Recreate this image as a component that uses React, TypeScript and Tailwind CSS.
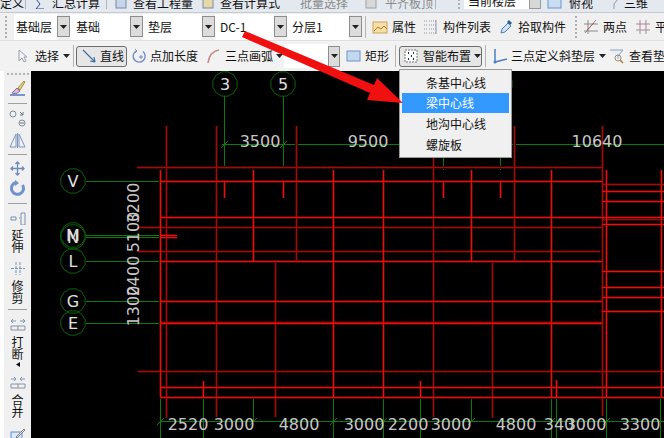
const CJK = "font-['Noto_Sans_CJK_SC','Noto_Sans',sans-serif]";

const brightV = [
  [160, 170, 397],
  [253, 170, 262],
  [333, 170, 397],
  [383, 170, 397],
  [471, 170, 262],
  [551, 170, 397],
  [606, 170, 397],
  [661, 170, 397],
  [224, 181, 198],
  [283, 181, 198],
  [443, 181, 198],
  [500, 181, 198],
  [203, 381, 397],
  [420, 381, 397],
  [556, 380, 397],
];
const darkV = [
  [166, 126, 418],
  [216, 126, 417],
  [296, 126, 260],
  [433, 126, 417],
  [514, 126, 260],
  [602, 126, 416],
  [275, 263, 417],
  [492, 263, 418],
];
const brightH = [
  [160, 602, 181],
  [160, 602, 217],
  [160, 177, 235],
  [160, 177, 237],
  [160, 602, 261],
  [160, 602, 301],
  [160, 602, 323],
  [160, 664, 387],
  [160, 664, 397],
  [602, 664, 191],
  [602, 664, 201],
  [602, 664, 217],
  [602, 664, 224],
  [602, 664, 271],
  [602, 664, 287],
  [602, 664, 297],
  [602, 664, 311],
];
const darkH = [
  [137, 602, 167],
  [137, 602, 227],
  [137, 600, 251],
  [160, 602, 322],
  [138, 664, 371],
  [602, 664, 184],
  [602, 664, 219],
];
const greenH = [
  [86, 160, 181],
  [86, 160, 235],
  [86, 160, 237],
  [86, 160, 261],
  [86, 160, 301],
  [86, 160, 323],
  [222, 664, 144],
  [160, 664, 421],
];
const greenV = [
  [224, 96, 169],
  [283, 96, 169],
  [443, 157, 170],
  [500, 157, 170],
  [160, 397, 438],
  [203, 397, 438],
  [253, 397, 421],
  [333, 397, 438],
  [383, 397, 438],
  [420, 397, 438],
  [471, 397, 421],
  [551, 397, 438],
  [556, 397, 438],
  [606, 397, 438],
  [660, 397, 438],
];
const ticks = [
  [224, 144],
  [283, 144],
  [160, 421],
  [253, 421],
  [333, 421],
  [383, 421],
  [471, 421],
  [551, 421],
  [606, 421],
];
const axisCircles = [
  { t: "3", x: 225, y: 84 },
  { t: "5", x: 283, y: 84 },
  { t: "", x: 500, y: 84 },
  { t: "V", x: 73, y: 181 },
  { t: "M", x: 73, y: 235 },
  { t: "N", x: 73, y: 237 },
  { t: "L", x: 73, y: 261 },
  { t: "G", x: 73, y: 301 },
  { t: "E", x: 73, y: 323 },
];
const dims = [
  { t: "3500", x: 260, y: 147 },
  { t: "9500", x: 368, y: 147 },
  { t: "10640", x: 597, y: 147 },
  { t: "2520", x: 188, y: 430 },
  { t: "3000", x: 234, y: 430 },
  { t: "4800", x: 299, y: 430 },
  { t: "3000", x: 364, y: 430 },
  { t: "2200", x: 408, y: 430 },
  { t: "3000", x: 451, y: 430 },
  { t: "4800", x: 516, y: 430 },
  { t: "340", x: 559, y: 430 },
  { t: "3000", x: 586, y: 430 },
  { t: "3300", x: 640, y: 430 },
];
const sideDims = [
  { t: "1300", y: 306 },
  { t: "2400", y: 276 },
  { t: "5100", y: 232 },
  { t: "3200", y: 203 },
];

function octagon(cx: number, cy: number, r: number) {
  const pts = [];
  for (let i = 0; i < 12; i++) {
    const a = (Math.PI / 6) * i + Math.PI / 12;
    pts.push(`${(cx + r * Math.cos(a)).toFixed(1)},${(cy + r * Math.sin(a)).toFixed(1)}`);
  }
  return pts.join(" ");
}

function CadCanvas() {
  return (
    <svg width="633" height="367" viewBox="31 71 633 367" className="block bg-black">
      <g shapeRendering="crispEdges">
        {greenH.map(([a, b, y], i) => (
          <rect key={i} x={a} y={y} width={b - a} height={1} fill="#0b7a0b" />
        ))}
        {greenV.map(([x, a, b], i) => (
          <rect key={i} x={x} y={a} width={1} height={b - a} fill="#0b7a0b" />
        ))}
        {/* soft edge, the reference lines bleed a little */}
        {darkH.map(([a, b, y], i) => (
          <rect key={i} x={a} y={y - 1} width={b - a} height={3} fill="#3a0303" />
        ))}
        {darkV.map(([x, a, b], i) => (
          <rect key={i} x={x - 1} y={a} width={3} height={b - a} fill="#3a0303" />
        ))}
        {brightH.map(([a, b, y], i) => (
          <rect key={i} x={a} y={y - 1} width={b - a} height={3} fill="#4a0404" />
        ))}
        {brightV.map(([x, a, b], i) => (
          <rect key={i} x={x - 1} y={a} width={3} height={b - a} fill="#4a0404" />
        ))}
        {darkH.map(([a, b, y], i) => (
          <rect key={i} x={a} y={y} width={b - a} height={1} fill="#a00c0c" />
        ))}
        {darkV.map(([x, a, b], i) => (
          <rect key={i} x={x} y={a} width={1} height={b - a} fill="#a00c0c" />
        ))}
        {brightH.map(([a, b, y], i) => (
          <rect key={i} x={a} y={y} width={b - a} height={1} fill="#f00a0a" />
        ))}
        {brightV.map(([x, a, b], i) => (
          <rect key={i} x={x} y={a} width={1} height={b - a} fill="#f00a0a" />
        ))}
      </g>
      {ticks.map(([x, y], i) => (
        <line key={i} x1={x - 3} x2={x + 4} y1={y + 4} y2={y - 3} stroke="#0b7a0b" />
      ))}
      {axisCircles.map((c) => (
        <g key={c.x + "-" + c.y}>
          <polygon points={octagon(c.x, c.y, 12.5)} fill="none" stroke="#0a640a" />
          <text x={c.x} y={c.y + 6} textAnchor="middle" fontSize="16" fill="#e0e0e0" fontFamily="'DejaVu Sans', sans-serif">
            {c.t}
          </text>
        </g>
      ))}
      {dims.map((d) => (
        <text key={d.t + d.x} x={d.x} y={d.y} textAnchor="middle" fontSize="16" fill="#c8c8c8" fontFamily="'DejaVu Sans', sans-serif">
          {d.t}
        </text>
      ))}
      {sideDims.map((d) => (
        <text
          key={d.t + d.y}
          textAnchor="middle"
          fontSize="16"
          fill="#c8c8c8"
          fontFamily="'DejaVu Sans', sans-serif"
          transform={`translate(139 ${d.y}) rotate(-90)`}
        >
          {d.t}
        </text>
      ))}
    </svg>
  );
}

function Sep({ className = "" }: { className?: string }) {
  return <div className={`w-px h-[22px] bg-[#b4b4b4] shrink-0 ${className}`} />;
}

function Caret({ className = "" }: { className?: string }) {
  return (
    <svg width="7" height="4" viewBox="0 0 7 4" className={`shrink-0 ${className}`}>
      <path d="M0 0h7L3.5 4z" fill="#222" />
    </svg>
  );
}

function Grip({ className = "" }: { className?: string }) {
  return <div className={`shrink-0 border-l-2 border-dotted border-[#b0b0b0] ${className}`} />;
}

function Combo({ label, w, pl }: { label: string; w: string; pl: string }) {
  return (
    <>
      <div className={`h-[26px] bg-white flex items-center shrink-0 ${w} ${pl}`}>{label}</div>
      <div className="w-[13px] h-[21px] bg-[#dcdcdc] border border-[#8d8d8d] flex items-center justify-center shrink-0">
        <Caret />
      </div>
    </>
  );
}

function Icon({ children, w = 16, h = 16, className = "" }: { children: React.ReactNode; w?: number; h?: number; className?: string }) {
  return (
    <svg width={w} height={h} viewBox={`0 0 ${w} ${h}`} fill="none" className={`shrink-0 ${className}`}>
      {children}
    </svg>
  );
}

function VText({ chars, className = "" }: { chars: string[]; className?: string }) {
  return (
    <div className={`flex flex-col items-center text-[12px] leading-[12px] text-[#111] shrink-0 ${className}`}>
      {chars.map((c) => (
        <span key={c} className="h-[12px]">{c}</span>
      ))}
    </div>
  );
}

function SideSep({ className = "" }: { className?: string }) {
  return <div className={`w-[19px] h-px bg-[#a0a0a0] shrink-0 ${className}`} />;
}

export default function App() {
  return (
    <div className={`relative w-[664px] h-[438px] overflow-hidden bg-[#f0f0f0] text-[12px] text-[#111] ${CJK}`}>
      {/* clipped top bar */}
      <div className="h-[13px] bg-[#e4e8ef] border-b border-[#c4c9d2] overflow-hidden flex items-end pb-[3px] leading-[12px] whitespace-nowrap">
        <span className="w-[25px] text-right pr-[5px] shrink-0">定义</span>
        <Sep />
        <Icon w={10} h={12} className="ml-[9px]">
          <path d="M9 2H1l4 5-4 5h8" stroke="#2c4a8a" />
        </Icon>
        <span className="ml-[7px] shrink-0">汇总计算</span>
        <Sep className="ml-[6px]" />
        <Icon w={12} h={12} className="ml-[8px]">
          <rect x="1" y="1" width="10" height="10" fill="#c8d4e8" stroke="#7a8aa8" />
        </Icon>
        <span className="ml-[6px] shrink-0">查看工程量</span>
        <Icon w={12} h={12} className="ml-[9px]">
          <rect x="1" y="1" width="10" height="10" fill="#e8d8a8" stroke="#7a8aa8" />
        </Icon>
        <span className="ml-[6px] shrink-0">查看计算式</span>
        <span className="ml-[20px] shrink-0 text-[#8a8a8a]">批量选择</span>
        <Icon w={12} h={12} className="ml-[17px]">
          <rect x="1" y="1" width="10" height="10" fill="#d8d8d8" stroke="#a0a0a0" />
        </Icon>
        <span className="ml-[8px] shrink-0 text-[#8a8a8a]">平齐板顶</span>
        <Sep className="ml-[2px]" />
        <Grip className="ml-[22px] h-[14px]" />
        <div className="ml-[4px] w-[65px] bg-white h-[14px] px-[4px] shrink-0">当前楼层</div>
        <div className="w-[12px] h-[14px] bg-[#d8d8d8] border border-[#999] shrink-0" />
        <Icon w={15} h={12} className="ml-[6px]">
          <rect x="1" y="1" width="13" height="10" fill="#c8dcf2" stroke="#6f94c8" />
        </Icon>
        <span className="ml-[7px] shrink-0">俯视</span>
        <Icon w={12} h={12} className="ml-[14px]">
          <path d="M1 2h10L7 7v5" stroke="#8a97ab" />
        </Icon>
        <span className="ml-[5px] shrink-0">三维</span>
      </div>

      {/* combo row */}
      <div className="h-[28px] flex items-center border-b border-[#e0e0e0] bg-[#f0f0f0] whitespace-nowrap">
        <Grip className="ml-[5px] h-[22px] mr-[7px]" />
        <Combo label="基础层" w="w-[43px]" pl="pl-[2px]" />
        <Combo label="基础" w="w-[60px]" pl="pl-[6px]" />
        <Combo label="垫层" w="w-[59px]" pl="pl-[5px]" />
        <Combo label="DC-1" w="w-[59px]" pl="pl-[5px]" />
        <Combo label="分层1" w="w-[62px]" pl="pl-[5px]" />
        <Sep className="ml-[3px]" />
        <Icon className="ml-[6px]">
          <rect x="1" y="3" width="14" height="11" fill="#f6dfa4" stroke="#c9a35a" />
          <path d="M2 12l4-4 3 2 3-3 3 3" stroke="#b0762a" />
        </Icon>
        <span className="ml-[4px] shrink-0">属性</span>
        <Icon w={14} className="ml-[7px]">
          <path d="M1 2h3M1 6h3M1 10h3M1 14h3M6 2h7M6 6h7M6 10h7M6 14h7" stroke="#8a97ab" strokeDasharray="1 1" />
          <path d="M13 1v14" stroke="#8a97ab" />
        </Icon>
        <span className="ml-[6px] shrink-0">构件列表</span>
        <Icon w={14} className="ml-[8px]">
          <path d="M2 14l1-4 6-6 3 3-6 6z" fill="#cfe2f6" stroke="#4c7fb8" />
          <path d="M8 3l2-2 3 3-2 2z" fill="#2f5f96" />
        </Icon>
        <span className="ml-[5px] shrink-0">拾取构件</span>
        <Grip className="ml-[9px] h-[22px]" />
        <Icon className="ml-[6px]">
          <path d="M5 1v14M13 1L2 14M1 5h14M1 12h14" stroke="#8a8a8a" />
          <path d="M4 11l7-7" stroke="#c0504d" />
        </Icon>
        <span className="ml-[4px] shrink-0">两点</span>
        <Icon className="ml-[8px]">
          <path d="M5 1v14M11 1v14M1 5h14M1 11h14" stroke="#a58a95" />
        </Icon>
        <span className="ml-[4px] shrink-0">平行</span>
      </div>

      {/* drawing tools row */}
      <div className="h-[30px] flex items-center bg-[#f2f2f2] whitespace-nowrap">
        <Icon w={11} className="ml-[17px]">
          <path d="M2 2v11l3-3 2 4 2-1-2-4h3z" fill="#f4f4f8" stroke="#9aa0aa" />
        </Icon>
        <span className="ml-[7px] shrink-0">选择</span>
        <Caret className="ml-[4px]" />
        <Sep className="ml-[3px]" />
        <div className="ml-[2px] w-[51px] h-[21px] flex items-center rounded-[3px] border border-[#6e6e6e] bg-[#e6e6e6] shrink-0">
          <Icon w={15} className="ml-[5px]">
            <path d="M1 2l12 12M13 14l-5-1M13 14l-1-5" stroke="#3a6ea8" strokeWidth="1.2" />
          </Icon>
          <span className="ml-[3px]">直线</span>
        </div>
        <Icon className="ml-[4px]">
          <path d="M12 3.5A6 6 0 1 1 5 3" stroke="#6f8fc0" strokeWidth="1.4" />
          <path d="M4 1l2 2-2 2M8 9h4M10 7v4" stroke="#6f8fc0" />
        </Icon>
        <span className="ml-[3px] shrink-0">点加长度</span>
        <Icon w={14} className="ml-[8px]">
          <path d="M2 15C3 8 7 3 13 2" stroke="#c98a80" strokeWidth="1.6" />
        </Icon>
        <span className="ml-[5px] shrink-0">三点画弧</span>
        <Caret className="ml-[3px]" />
        <div className="ml-[1px] w-[44px] h-[24px] bg-white shrink-0" />
        <div className="w-[12px] h-[21px] bg-[#dcdcdc] border border-[#8d8d8d] flex items-center justify-center shrink-0">
          <Caret />
        </div>
        <Icon w={15} className="ml-[6px]">
          <rect x="1" y="3" width="13" height="10" fill="#c4d8f2" stroke="#6f94c8" />
        </Icon>
        <span className="ml-[4px] shrink-0">矩形</span>
        <Sep className="ml-[6px]" />
        <div className="ml-[3px] w-[83px] h-[21px] flex items-center rounded-[3px] border border-[#6e6e6e] bg-[#e6e6e6] shrink-0">
          <Icon w={14} className="ml-[4px]">
            <rect x="1" y="2" width="12" height="12" fill="#fff" stroke="#777" strokeDasharray="2 1" />
            <path d="M4 5h1M9 5h1M7 8h1M4 11h1M9 11h1" stroke="#16356e" strokeWidth="2" />
          </Icon>
          <span className="ml-[5px]">智能布置</span>
          <Caret className="ml-[3px]" />
        </div>
        <Sep className="ml-[3px]" />
        <Icon className="ml-[6px]">
          <path d="M3 1v13l12-3" stroke="#4d7fc4" strokeWidth="1.5" />
          <circle cx="3" cy="14" r="1.5" fill="#4d7fc4" />
        </Icon>
        <span className="ml-[3px] shrink-0">三点定义斜垫层</span>
        <Caret className="ml-[4px]" />
        <Icon w={15} className="ml-[3px]">
          <path d="M1 2h13L9 8v3" stroke="#8ca0bc" fill="#e8eef6" />
          <circle cx="9" cy="10" r="3" stroke="#a08a70" />
          <path d="M11 12l3 3" stroke="#b07a40" strokeWidth="1.5" />
        </Icon>
        <span className="ml-[5px] shrink-0">查看垫层</span>
      </div>

      <div className="flex">
        {/* left tool strip */}
        <div className="w-[31px] h-[367px] bg-white shrink-0 flex justify-end">
          <div className="w-[27px] h-full bg-[#f0f0f0] flex flex-col items-center overflow-hidden">
            <div className="mt-[2px] w-[22px] border-t-2 border-dotted border-[#b4b4b4] shrink-0" />
            <Icon w={17} h={17} className="mt-[5px]">
              <path d="M1 15h15" stroke="#4f7ac0" strokeWidth="1.5" />
              <path d="M3 13l5-5 3 3-4 3z" fill="#d8b8d8" stroke="#8a6a9a" />
              <path d="M9 8l6-7 1 1-5 8z" fill="#e8d070" stroke="#a89040" />
            </Icon>
            <SideSep className="mt-[6px]" />
            <Icon w={17} h={18} className="mt-[5px]">
              <circle cx="4" cy="5" r="3" stroke="#808c9c" />
              <circle cx="13" cy="14" r="3" stroke="#808c9c" />
              <path d="M11 3l3 3M14 3v3h-3M11 14h4" stroke="#6a7686" />
            </Icon>
            <Icon w={17} h={17} className="mt-[5px]">
              <path d="M7 2L1 15h6zM10 2l6 13h-6z" stroke="#7d95bd" fill="#eef2f8" />
              <path d="M8.5 1v15" stroke="#7d95bd" />
            </Icon>
            <SideSep className="mt-[5px]" />
            <Icon w={15} h={15} className="mt-[6px]">
              <path d="M7.5 1v13M1 7.5h13M5.5 3l2-2 2 2M5.5 12l2 2 2-2M3 5.5l-2 2 2 2M12 5.5l2 2-2 2" stroke="#6d8cbc" strokeWidth="1.3" />
            </Icon>
            <Icon w={16} h={16} className="mt-[4px]">
              <path d="M12.5 5A6 6 0 1 1 6 2.5" stroke="#6f93d0" strokeWidth="3" />
              <path d="M5 0v6l4-3z" fill="#6f93d0" />
            </Icon>
            <SideSep className="mt-[7px]" />
            <Icon w={16} h={13} className="mt-[8px]">
              <path d="M1 5h5v3H1zM9 6h1M11 1v12M15 1v12M11 1h4M11 13h4" stroke="#7d90ac" />
            </Icon>
            <VText chars={["延", "伸"]} className="mt-[4px]" />
            <Icon w={16} h={13} className="mt-[9px]">
              <path d="M1 6.5h14M6 0v13M10 0v13" stroke="#7d90ac" strokeDasharray="3 1" />
            </Icon>
            <VText chars={["修", "剪"]} className="mt-[5px]" />
            <SideSep className="mt-[5px]" />
            <Icon w={16} h={13} className="mt-[8px]">
              <path d="M1 3h5M10 3h5M1 3l2-2M1 3l2 2M15 3l-2-2M15 3l-2 2" stroke="#7d95bd" />
              <path d="M1 8h14v4H1zM8 8v4" stroke="#8a94a4" />
            </Icon>
            <VText chars={["打", "断"]} className="mt-[5px]" />
            <svg width="4" height="5" viewBox="0 0 4 5" className="mt-[2px] shrink-0">
              <path d="M4 0v5L0 2.5z" fill="#111" />
            </svg>
            <Icon w={16} h={12} className="mt-[10px]">
              <path d="M1 2h5M10 2h5M6 2L4 0M6 2L4 4M10 2l2-2M10 2l2 2" stroke="#7d95bd" />
              <path d="M1 7h14v4H1zM8 7v4" stroke="#8a94a4" />
            </Icon>
            <VText chars={["合", "并"]} className="mt-[5px]" />
            <Icon w={16} h={16} className="mt-[9px]">
              <rect x="1" y="5" width="11" height="10" fill="#d8e8f8" stroke="#5f8fc8" />
              <path d="M6 10l8-8 1 1-8 8z" fill="#e8e8e8" stroke="#808080" />
            </Icon>
          </div>
        </div>
        <CadCanvas />
      </div>

      {/* dropdown menu */}
      <div className="absolute left-[399px] top-[69px] w-[113px] h-[89px] bg-[#f0f0f0] border border-[#9a9a9a] pt-[2px] px-[2px] leading-[21px]">
        <div className="h-[21px] pl-[24px]">条基中心线</div>
        <div className="h-[20px] leading-[20px] pl-[24px] bg-[#3399ff] text-white">梁中心线</div>
        <div className="h-[21px] pl-[24px]">地沟中心线</div>
        <div className="h-[21px] pl-[24px]">螺旋板</div>
      </div>

      {/* red annotation arrow */}
      <svg width="664" height="438" viewBox="0 0 664 438" className="absolute left-0 top-0 pointer-events-none">
        <polygon points="242,37 245,31 374,85 377,78 403,103 367,100 370,93" fill="#f01010" />
      </svg>
    </div>
  );
}
